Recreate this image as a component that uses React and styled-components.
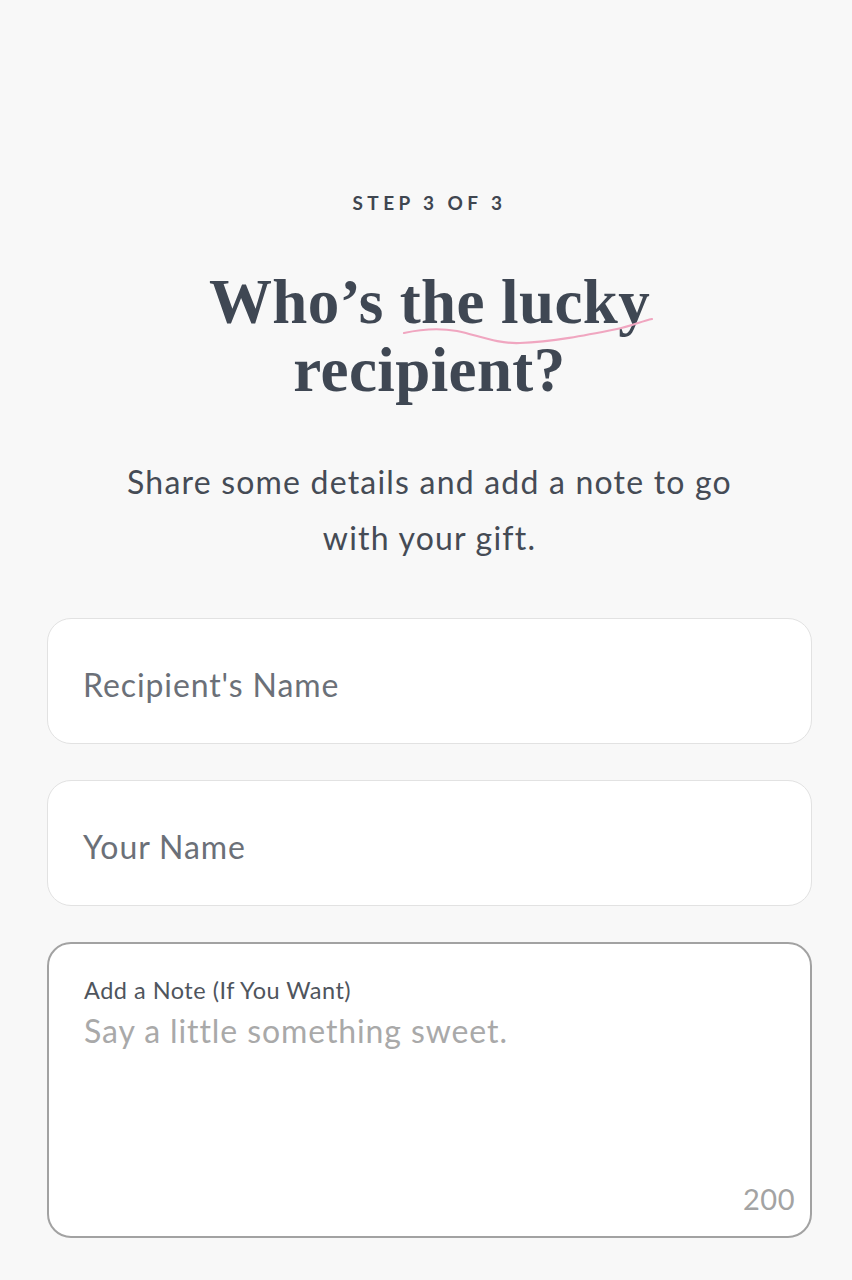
import React from "react";
import styled, { createGlobalStyle } from "styled-components";

const Global = createGlobalStyle`
  html, body { margin: 0; padding: 0; background: #f8f8f8; }
  body { font-family: Lato, "Open Sans", sans-serif; -webkit-font-smoothing: antialiased; }
  * { box-sizing: border-box; }
`;

const Page = styled.main`
  min-height: 1280px;
  background: #f8f8f8;
  padding: 190px 40px 40px 47px;
  display: flex;
  flex-direction: column;
  align-items: center;
`;

const Step = styled.div`
  font-family: Lato, sans-serif;
  font-weight: 700;
  font-size: 19px;
  letter-spacing: 4.4px;
  color: #3f4650;
  line-height: 26px;
`;

const Heading = styled.h1`
  position: relative;
  margin: 52px 0 0;
  font-family: "Liberation Serif", "Times New Roman", serif;
  font-weight: 700;
  font-size: 63px;
  line-height: 68px;
  color: #3f4753;
  text-align: center;
  letter-spacing: 0.4px;
`;

const Squiggle = styled.svg`
  position: absolute;
  left: 193px;
  top: 47px;
  width: 252px;
  height: 32px;
  pointer-events: none;
`;

const Sub = styled.p`
  margin: 50px 0 0;
  font-family: Lato, sans-serif;
  font-size: 32px;
  letter-spacing: 1.2px;
  line-height: 56px;
  color: #454b55;
  text-align: center;
  max-width: 680px;
`;

const Form = styled.div`
  margin-top: 52px;
  width: 765px;
  display: flex;
  flex-direction: column;
  gap: 36px;
`;

const Field = styled.div`
  height: ${(p) => p.$h}px;
  background: #fff;
  border: ${(p) => (p.$dark ? "2px solid #a2a2a2" : "1.5px solid #e2e2e2")};
  border-radius: 24px;
  position: relative;
  display: flex;
  flex-direction: column;
  justify-content: ${(p) => (p.$dark ? "flex-start" : "center")};
  padding: ${(p) => (p.$dark ? "32px 35px" : "8px 35px 0")};
`;

const Placeholder = styled.span`
  font-family: Lato, sans-serif;
  font-size: 32px;
  letter-spacing: 0.9px;
  color: ${(p) => p.$c || "#6b7078"};
  line-height: 38px;
`;

const Label = styled.span`
  font-family: Lato, sans-serif;
  font-size: 23.5px;
  letter-spacing: 0.5px;
  color: #4f555d;
  line-height: 28px;
  margin-bottom: 8px;
`;

const Counter = styled.span`
  position: absolute;
  right: 15px;
  bottom: 20px;
  font-family: Lato, sans-serif;
  font-size: 29px;
  letter-spacing: 0.5px;
  color: #a3a3a3;
`;

export default function App() {
  return (
    <>
      <Global />
      <Page>
        <Step>STEP 3 OF 3</Step>
        <Heading>
          Who’s the lucky
          <br />
          recipient?
          <Squiggle viewBox="0 0 252 32" fill="none">
            <path
              d="M2 18 C 20 14, 38 13, 55 16 C 75 20, 95 29, 118 28 C 150 27, 185 20, 215 14 C 230 11, 240 6, 250 4"
              stroke="#f0a6c0"
              strokeWidth="2.2"
              strokeLinecap="round"
            />
          </Squiggle>
        </Heading>
        <Sub>Share some details and add a note to go with your gift.</Sub>
        <Form>
          <Field $h={126}>
            <Placeholder>Recipient's Name</Placeholder>
          </Field>
          <Field $h={126}>
            <Placeholder>Your Name</Placeholder>
          </Field>
          <Field $h={296} $dark>
            <Label>Add a Note (If You Want)</Label>
            <Placeholder $c="#a9a9a9">Say a little something sweet.</Placeholder>
            <Counter>200</Counter>
          </Field>
        </Form>
      </Page>
    </>
  );
}
